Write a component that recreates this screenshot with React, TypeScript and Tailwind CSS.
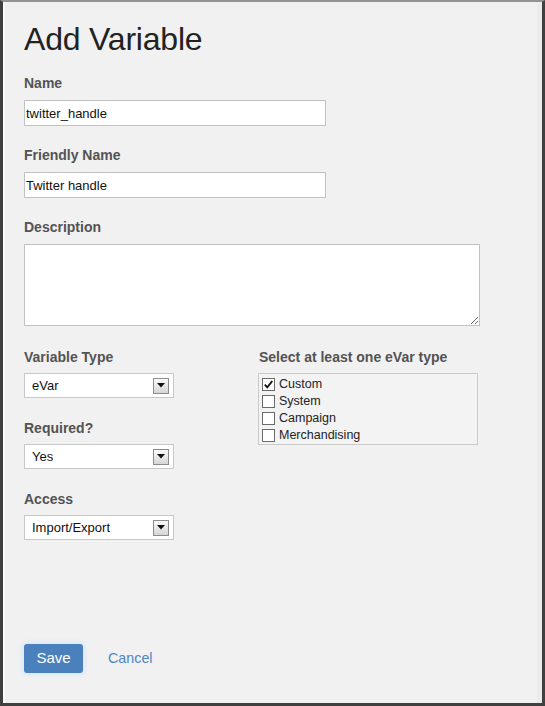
import React from "react";

const font = { fontFamily: '"Liberation Sans", Arial, sans-serif' };

function Label({ children, className = "" }: { children: React.ReactNode; className?: string }) {
  return (
    <div className={"h-[20px] text-[14px] leading-[20px] font-bold text-[#535353] " + className}>
      {children}
    </div>
  );
}

function SelectBox({ value }: { value: string }) {
  return (
    <div className="w-[150px] h-[25px] bg-white border border-[#c8c8c8] flex items-center justify-between pl-[7px] pr-[4px]">
      <span className="text-[13px] text-[#111]">{value}</span>
      <div className="w-[16px] h-[16px] border border-[#8c8c8c] bg-gradient-to-b from-[#fbfbfb] to-[#d6d6d6] flex items-center justify-center">
        <svg width="8" height="5" viewBox="0 0 8 5">
          <path d="M0 0 H8 L4 4.5 Z" fill="#111" />
        </svg>
      </div>
    </div>
  );
}

function Check({ checked, label }: { checked?: boolean; label: string }) {
  return (
    <div className="h-[17px] flex items-center gap-[4px]">
      <div className="w-[13px] h-[13px] border border-[#6a6a6a] bg-white flex items-center justify-center">
        {checked && (
          <svg width="11" height="11" viewBox="0 0 11 11">
            <path d="M1.8 5.6 L4.3 8.3 L9.3 2" stroke="#111" strokeWidth="1.9" fill="none" />
          </svg>
        )}
      </div>
      <span className="text-[12.5px] text-[#222]">{label}</span>
    </div>
  );
}

export default function App() {
  return (
    <div
      style={font}
      className="w-[545px] h-[706px] bg-[#f1f1f1] border-l-[3px] border-r-[3px] border-b-[3px] border-t-[2px] border-[#404040] border-t-[#939393] shadow-[inset_2px_0_0_#fafafa,inset_-5px_0_0_#ebebeb] flex flex-col pl-[21px] pt-[19px] pb-[30px]"
    >
      <h1 className="text-[32px] leading-[36px] font-normal text-[#222] tracking-[-0.2px]">Add Variable</h1>

      <Label className="mt-[16px]">Name</Label>
      <input
        defaultValue="twitter_handle"
        className="mt-[7px] w-[302px] h-[26px] bg-white border border-[#c2c2c2] px-[1px] text-[13px] text-[#111] outline-none"
      />

      <Label className="mt-[19px]">Friendly Name</Label>
      <input
        defaultValue="Twitter handle"
        className="mt-[7px] w-[302px] h-[26px] bg-white border border-[#c2c2c2] px-[1px] text-[13px] text-[#111] outline-none"
      />

      <Label className="mt-[19px]">Description</Label>
      <textarea className="mt-[7px] w-[456px] h-[82px] bg-white border border-[#c2c2c2] resize outline-none" />

      <div className="mt-[21px] grid grid-cols-[234px_1fr]">
        <div className="flex flex-col">
          <Label>Variable Type</Label>
          <div className="mt-[6px]">
            <SelectBox value="eVar" />
          </div>
          <Label className="mt-[20px]">Required?</Label>
          <div className="mt-[6px]">
            <SelectBox value="Yes" />
          </div>
          <Label className="mt-[20px]">Access</Label>
          <div className="mt-[6px]">
            <SelectBox value="Import/Export" />
          </div>
        </div>
        <div className="flex flex-col">
          <Label className="pl-[1px]">Select at least one eVar type</Label>
          <div className="mt-[6px] w-[220px] h-[72px] border border-[#cacaca] bg-[#f3f3f3] pl-[3px] pt-[2px]">
            <Check checked label="Custom" />
            <Check label="System" />
            <Check label="Campaign" />
            <Check label="Merchandising" />
          </div>
        </div>
      </div>

      <div className="mt-auto flex items-center">
        <button className="w-[59px] h-[29px] rounded-[3px] bg-[#4a81bd] text-white text-[15px] shadow-[0_0_4px_2px_rgba(205,228,255,0.7)]">
          Save
        </button>
        <span className="ml-[25px] text-[14.3px] text-[#4e86c0]">Cancel</span>
      </div>
    </div>
  );
}
